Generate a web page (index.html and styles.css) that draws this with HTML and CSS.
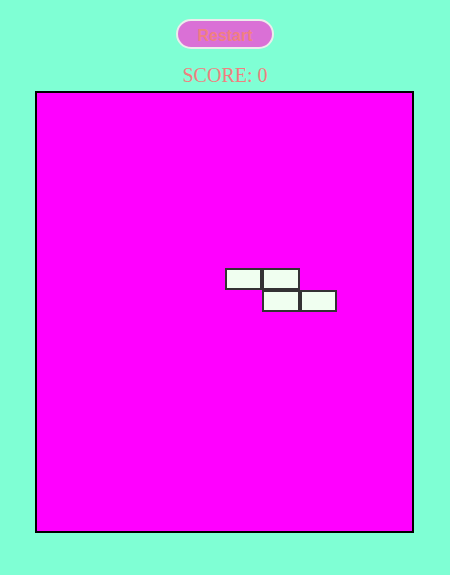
FILE: index.html
```html
<!DOCTYPE html>
<html>
<head>
<meta charset="utf-8">
<link rel="stylesheet" href="styles.css">
</head>
<body>
<div class="app">
  <button class="restart" type="button">Restart</button>
  <div class="score">SCORE: 0</div>
  <div class="board">
    <div class="cell c5 r8"></div>
    <div class="cell c6 r8"></div>
    <div class="cell c6 r9"></div>
    <div class="cell c7 r9"></div>
  </div>
</div>
</body>
</html>
```
FILE: styles.css
```css
html, body {
  margin: 0;
  padding: 0;
  background: #7fffd4;
}
.app {
  display: flex;
  flex-direction: column;
  align-items: center;
  padding-top: 19px;
}
.restart {
  margin: 0;
  height: 30px;
  padding: 6px 19.5px 2px;
  box-sizing: border-box;
  border: 2px solid #ececec;
  border-radius: 15px;
  background: #da70d6;
  color: #f08080;
  font-family: Arial, "Liberation Sans", sans-serif;
  font-size: 16px;
  font-weight: 700;
  line-height: 18px;
}
.score {
  margin-top: 15px;
  font-family: "Liberation Serif", "Times New Roman", serif;
  font-size: 20px;
  line-height: 23px;
  color: #f08080;
}
.board {
  margin-top: 4px;
  margin-right: 1px;
  width: 375px;
  height: 438px;
  border: 2px solid #000;
  background: #ff00ff;
  display: grid;
  grid-template-columns: repeat(10, 37.5px);
  grid-template-rows: repeat(20, 21.9px);
}
.cell {
  background: #f0fff0;
  border: 2px solid #333;
  box-sizing: border-box;
}
.c5 { grid-column: 6; }
.c6 { grid-column: 7; }
.c7 { grid-column: 8; }
.r8 { grid-row: 9; }
.r9 { grid-row: 10; }
```
